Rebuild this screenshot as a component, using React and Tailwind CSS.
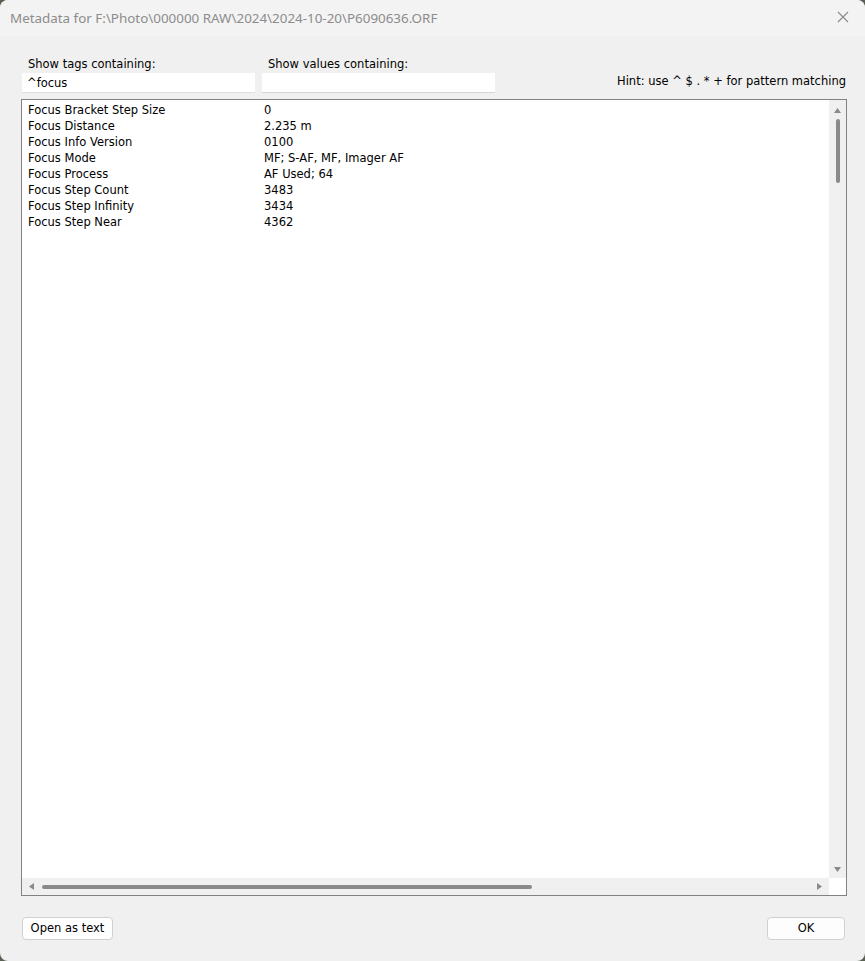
import React from "react";

const rows = [
  ["Focus Bracket Step Size", "0"],
  ["Focus Distance", "2.235 m"],
  ["Focus Info Version", "0100"],
  ["Focus Mode", "MF; S-AF, MF, Imager AF"],
  ["Focus Process", "AF Used; 64"],
  ["Focus Step Count", "3483"],
  ["Focus Step Infinity", "3434"],
  ["Focus Step Near", "4362"],
];

const ui = { fontFamily: '"DejaVu Sans", "Liberation Sans", sans-serif' };
const title = { fontFamily: '"Noto Sans", "Open Sans", sans-serif' };

export default function App() {
  return (
    <div className="w-[865px] h-[961px] bg-[#5b6152] overflow-hidden">
      <div className="w-[865px] h-[961px] bg-[#f0f0f0] rounded-[8px] overflow-hidden flex flex-col text-[11.5px] text-black" style={ui}>
        {/* title bar */}
        <div className="h-[36px] bg-[#f3f3f3] flex items-center justify-between pl-[10px] pr-[16px] shrink-0">
          <span className="text-[13.4px] text-[#8c8c8c]" style={title}>
            Metadata for F:\Photo\000000 RAW\2024\2024-10-20\P6090636.ORF
          </span>
          <svg width="12" height="12" viewBox="0 0 12 12" className="mt-[-2px]">
            <path d="M1 1L11 11M11 1L1 11" stroke="#8a8a8a" strokeWidth="1.1" fill="none" />
          </svg>
        </div>

        {/* filters */}
        <div className="flex items-end pl-[22px] pr-[19px] pt-[19px] shrink-0">
          <div className="flex flex-col w-[233px]">
            <span className="pl-[6px] h-[18px] leading-[19px]">Show tags containing:</span>
            <div className="h-[20px] bg-white border-b border-[#e0e0e0] pl-[5px] leading-[20px]">^focus</div>
          </div>
          <div className="flex flex-col w-[233px] ml-[7px]">
            <span className="pl-[6px] h-[18px] leading-[19px]">Show values containing:</span>
            <div className="h-[20px] bg-white border-b border-[#d6d6d6]"></div>
          </div>
          <div className="flex-1 text-right h-[20px] leading-[17px]">Hint: use ^ $ . * + for pattern matching</div>
        </div>

        {/* list */}
        <div className="ml-[21px] mr-[18px] mt-[6px] h-[797px] border border-[#828282] bg-white flex flex-col shrink-0">
          <div className="flex flex-1 min-h-0">
            <div className="flex-1 pt-[2px] pl-[6px]">
              {rows.map(([k, v]) => (
                <div key={k} className="flex h-[16px] leading-[16px]">
                  <span className="w-[236px]">{k}</span>
                  <span>{v}</span>
                </div>
              ))}
            </div>
            {/* vertical scrollbar */}
            <div className="w-[17px] bg-[#f0f0f0] flex flex-col items-center">
              <svg width="9" height="7" viewBox="0 0 9 7" className="mt-[7px]">
                <path d="M4.5 1L8 6H1z" fill="#8a8a8a" />
              </svg>
              <div className="w-[4px] h-[64px] rounded-full bg-[#8a8a8a] mt-[5px]"></div>
              <div className="flex-1"></div>
              <svg width="9" height="7" viewBox="0 0 9 7" className="mb-[5px]">
                <path d="M1 1H8L4.5 6z" fill="#8a8a8a" />
              </svg>
            </div>
          </div>
          {/* horizontal scrollbar */}
          <div className="h-[17px] flex shrink-0">
            <div className="flex-1 bg-[#f0f0f0] flex items-center">
              <svg width="7" height="9" viewBox="0 0 7 9" className="ml-[6px]">
                <path d="M6 1V8L1 4.5z" fill="#8a8a8a" />
              </svg>
              <div className="h-[4px] w-[490px] rounded-full bg-[#8a8a8a] ml-[7px]"></div>
              <div className="flex-1"></div>
              <svg width="7" height="9" viewBox="0 0 7 9" className="mr-[6px]">
                <path d="M1 1V8L6 4.5z" fill="#8a8a8a" />
              </svg>
            </div>
            <div className="w-[17px] bg-white"></div>
          </div>
        </div>

        {/* buttons */}
        <div className="flex justify-between pl-[22px] pr-[20px] mt-[21px] shrink-0">
          <button className="h-[23px] w-[91px] bg-white border border-[#d0d0d0] rounded-[4px] text-[11.5px] leading-[21px]" style={ui}>
            Open as text
          </button>
          <button className="h-[23px] w-[78px] bg-[#fdfdfd] border border-[#d0d0d0] rounded-[4px] text-[11.5px] leading-[21px]" style={ui}>
            OK
          </button>
        </div>
      </div>
    </div>
  );
}
